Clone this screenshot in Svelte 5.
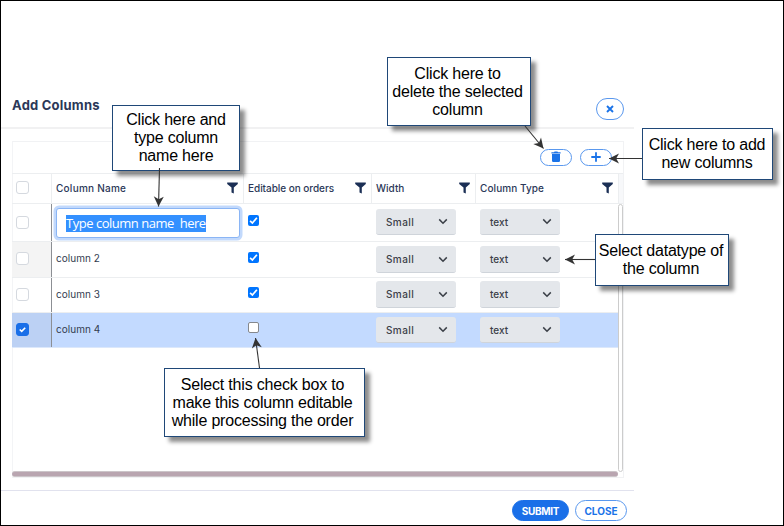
<script>
  const headers = [
    { label: 'Column Name', cls: 'name' },
    { label: 'Editable on orders', cls: 'edit' },
    { label: 'Width', cls: 'width' },
    { label: 'Column Type', cls: 'type' }
  ];
  const rows = [
    { name: 'Type column name  here', editing: true, editable: true, selected: false, h: 38, boxTop: 12, editTop: 11, selTop: 5, selH: 26 },
    { name: 'column 2', editable: true, selected: false, hover: true, h: 36, boxTop: 10, editTop: 10, selTop: 4, selH: 27 },
    { name: 'column 3', editable: true, selected: false, h: 35, boxTop: 10, editTop: 9, selTop: 3, selH: 27 },
    { name: 'column 4', editable: false, selected: true, h: 35, boxTop: 10, editTop: 9, selTop: 4, selH: 26 }
  ];
  const notes = [
    { x: 112, y: 105, w: 128, h: 66, pad: 0, lines: ['Click here and', 'type column', 'name here'] },
    { x: 387, y: 57, w: 144, h: 69, pad: 3, lines: ['Click here to', 'delete the selected', 'column'] },
    { x: 642, y: 128, w: 131, h: 52, pad: 1, lines: ['Click here to add', 'new columns'] },
    { x: 595, y: 234, w: 134, h: 52, pad: 2, lines: ['Select datatype of', 'the column'] },
    { x: 164, y: 368, w: 201, h: 69, pad: 4, lines: ['Select this check box to', 'make this column editable', 'while processing the order'] }
  ];
  const arrows = [
    [159.5, 168, 158.5, 206.5],
    [525, 126, 543.5, 148.5],
    [642, 158.5, 609, 158.5],
    [595, 259.5, 565, 259.5],
    [259.5, 368, 255.5, 338]
  ];
  const angle = (a) => (Math.atan2(a[3] - a[1], a[2] - a[0]) * 180) / Math.PI;
</script>

{#snippet select(label, row)}
  <div class="select" style="margin-top:{row.selTop}px;height:{row.selH}px">
    <span class:wide={label === 'Small'}>{label}</span>
    <svg width="10" height="7" viewBox="0 0 10 7"><path d="M1.2 1.4 5 5.2 8.8 1.4" fill="none" stroke="#3b4048" stroke-width="1.5" /></svg>
  </div>
{/snippet}

<div class="frame">
  <div class="dialog">
    <header>
      <h1>Add Columns</h1>
      <button class="pill close-x" aria-label="Close">
        <svg width="8" height="8" viewBox="0 0 8 8"><path d="M1 1 7 7M7 1 1 7" stroke="#1a73e8" stroke-width="1.9" /></svg>
      </button>
    </header>

    <div class="grid">
      <div class="toolbar">
        <button class="pill tool" aria-label="Delete">
          <svg width="10" height="12" viewBox="0 0 10 12"><path d="M.4 1.2H3L3.6.5h2.8L7 1.2h2.6v1.2H.4zM1 3h8v6.8q0 1.2-1.2 1.2H2.2Q1 11 1 9.8z" fill="#1a73e8" /></svg>
        </button>
        <button class="pill tool" aria-label="Add">
          <svg width="10" height="10" viewBox="0 0 10 10"><path d="M5 .3V9.7M.3 5H9.7" stroke="#1a73e8" stroke-width="1.8" /></svg>
        </button>
      </div>
      <div class="row head">
        <div class="cell pick"><span class="box"></span></div>
        {#each headers as h}
          <div class="cell {h.cls}">
            <span>{h.label}</span>
            <svg width="11" height="12" viewBox="0 0 11 12"><path d="M.2.4H10.8V2L6.8 5.6V11.6L4.5 10.4V5.6L.2 2z" fill="#1b2f55" /></svg>
          </div>
        {/each}
        <div class="gutter"></div>
      </div>
      <div class="body">
        <div class="rows">
          {#each rows as r}
            <div class="row" class:selected={r.selected} style="height:{r.h}px">
              <div class="cell pick" class:hover={r.hover}>
                <span class="box" class:on={r.selected} style="margin-top:{r.boxTop}px">
                  {#if r.selected}
                    <svg width="11" height="11" viewBox="0 0 11 11"><path d="M2.7 5.5 4.7 7.4 8.2 3.7" fill="none" stroke="#fff" stroke-width="1.6" /></svg>
                  {/if}
                </span>
              </div>
              <div class="cell name">
                {#if r.editing}
                  <div class="input"><mark>{r.name}</mark></div>
                {:else}
                  <span class="text">{r.name}</span>
                {/if}
              </div>
              <div class="cell edit">
                <span class="check" class:on={r.editable} style="margin-top:{r.editTop}px">
                  {#if r.editable}
                    <svg width="11" height="11" viewBox="0 0 11 11"><path d="M2.1 5.8 4.4 8 8.9 2.7" fill="none" stroke="#fff" stroke-width="1.7" /></svg>
                  {/if}
                </span>
              </div>
              <div class="cell width">{@render select('Small', r)}</div>
              <div class="cell type">{@render select('text', r)}</div>
            </div>
          {/each}
        </div>
        <div class="vbar"></div>
      </div>
      <div class="hbar"></div>
    </div>

    <footer>
      <button class="pill submit">SUBMIT</button>
      <button class="pill cancel">CLOSE</button>
    </footer>
  </div>

  {#each notes as n}
    <div class="note" style="left:{n.x}px;top:{n.y}px;width:{n.w}px;height:{n.h}px;padding-right:{n.pad}px">
      {#each n.lines as line}<div>{line}</div>{/each}
    </div>
  {/each}
  <svg class="arrows" width="784" height="526" viewBox="0 0 784 526">
    {#each arrows as a}
      <line x1={a[0]} y1={a[1]} x2={a[2]} y2={a[3]} stroke="#333" stroke-width="1.1" />
      <path d="M0 0-10-5-7.2 0-10 5z" fill="#333" transform="translate({a[2]} {a[3]}) rotate({angle(a)})" />
    {/each}
  </svg>
</div>

<style>
  :global(body) { margin: 0; background: #fff; }
  .frame, .frame :global(*) { box-sizing: border-box; }
  .frame {
    position: relative; width: 784px; height: 526px; border: 1px solid #000;
    background: #fff; overflow: hidden; font-family: Inter, 'Open Sans', sans-serif; color: #2b3858;
  }
  .dialog { width: 633px; height: 524px; padding-top: 83px; display: flex; flex-direction: column; }
  svg { display: block; }
  header {
    height: 45px; flex: none; border-bottom: 2px solid #f1f1f2; display: flex;
    align-items: flex-start; justify-content: space-between; padding: 12px 10px 0 11px;
  }
  h1 { margin: 0; font-size: 13px; line-height: 18px; font-weight: 650; letter-spacing: .22px; }
  .pill {
    display: flex; align-items: center; justify-content: center; padding: 0; margin: 0;
    border: 1px solid #5a98ee; border-radius: 11px; background: #fff; color: #1a73e8; font: inherit;
  }
  .close-x { width: 28px; height: 22px; margin-top: 2px; }
  .grid {
    margin: 12px 0 0 11px; width: 612px; height: 337px; flex: none;
    border: 1px solid #f1f2f4; display: flex; flex-direction: column; border-left-color: #f3f4f6;
  }
  .toolbar { height: 31px; flex: none; display: flex; justify-content: flex-end; align-items: flex-start; gap: 8px; padding: 7px 11px 0 0; }
  .tool { width: 32px; height: 17px; border-radius: 9px; padding-bottom: 1px; }
  .row { display: flex; border-bottom: 1px solid #eceef0; margin-left: -1px; }
  .cell { flex: none; height: 100%; }
  .pick { width: 40px; padding-left: 4px; border-right: 1px solid #8c8f94; }
  .name { width: 192px; padding-left: 4px; }
  .edit { width: 128px; padding-left: 4px; }
  .width { width: 104px; padding-left: 4px; }
  .type { width: 142px; padding-left: 4px; }
  .head { height: 31px; flex: none; border-top: 1px solid #eceef0; font-size: 10px; font-weight: 500; }
  .head .cell { display: flex; align-items: center; justify-content: space-between; padding-right: 5px; border-right: 1px solid #eceef0; padding-bottom: 2px; }
  .head .type { width: 143px; }
  .head .edit span { letter-spacing: -.04px; }
  .head .name span { letter-spacing: .25px; }
  .head .type span { letter-spacing: .08px; }
  .gutter { flex: 1; background: #f7f8fa; }
  .box {
    display: block; width: 13px; height: 13px; border: 1px solid #d5d9df; border-radius: 3px; background: #fff;
  }
  .box.on, .check.on { background: #1a6fe8; border-color: #1a6fe8; }
  .check.on { background: #0075ff; border: 0; }
  .check { display: block; width: 11px; height: 11px; border: 1px solid #85888d; border-radius: 2px; background: #fff; }
  .hover { background: #f4f4f4; }
  .selected { background: #c3daff; border-bottom-color: #dce8fb; }
  .selected .pick { background: #bcd1f4; }
  .body { flex: none; height: 267px; display: flex; }
  .rows { width: 605px; flex: none; }
  .text { display: block; margin-top: 9px; font-size: 10px; line-height: 14px; letter-spacing: .05px; color: #333d50; }
  .input {
    width: 184px; height: 30px; margin-top: 4px; padding: 6px 0 0 9px; border: 1px solid #8ab5f5;
    border-radius: 3px; background: #fff; box-shadow: 0 0 0 2.5px #c2d9fc;
  }
  mark {
    display: inline-block; height: 17px; background: #3390ff; color: #fff; white-space: pre;
    font: 13px/17px 'Open Sans', sans-serif; letter-spacing: -.48px; vertical-align: top;
  }
  .select {
    width: 80px; display: flex; align-items: center; justify-content: space-between; padding: 0 8px 0 10px;
    background: #e4e7eb; border-bottom: 1px solid #cfd4da; border-radius: 3px; font-size: 10px; font-weight: 500; color: #3b4048;
  }
  .wide { letter-spacing: .4px; }
  .vbar { width: 5px; height: 268px; flex: none; border: 1px solid #ccc; border-radius: 3px; background: #fff; }
  .hbar { flex: none; height: 6px; width: 606px; margin-left: -1px; background: #b9a5b0; border-top: 1px solid #ccc5c9; border-bottom: 1px solid #ccc5c9; border-radius: 3px; }
  footer {
    margin-top: 12px; height: 34px; border-top: 1px solid #e1e2ee; display: flex; gap: 6px;
    justify-content: flex-end; padding: 9px 7px 0 0;
  }
  footer .pill { height: 21px; font-size: 10px; font-weight: 700; }
  .submit { width: 57px; background: #1a6fe8; border-color: #1a6fe8; color: #fff; }
  footer .submit { letter-spacing: -.3px; }
  .cancel { width: 52px; }
  .note {
    position: absolute; margin: -1px 0 0 -1px; border: 1px solid #1f4878; background: #fff; color: #000;
    box-shadow: 5px 5px 4px rgba(0, 0, 0, .45); font: 16px/18px 'Liberation Sans', Arial, sans-serif; letter-spacing: -.2px;
    display: flex; flex-direction: column; justify-content: center; text-align: center; white-space: nowrap;
  }
  .arrows { position: absolute; left: -1px; top: -1px; pointer-events: none; }
</style>
